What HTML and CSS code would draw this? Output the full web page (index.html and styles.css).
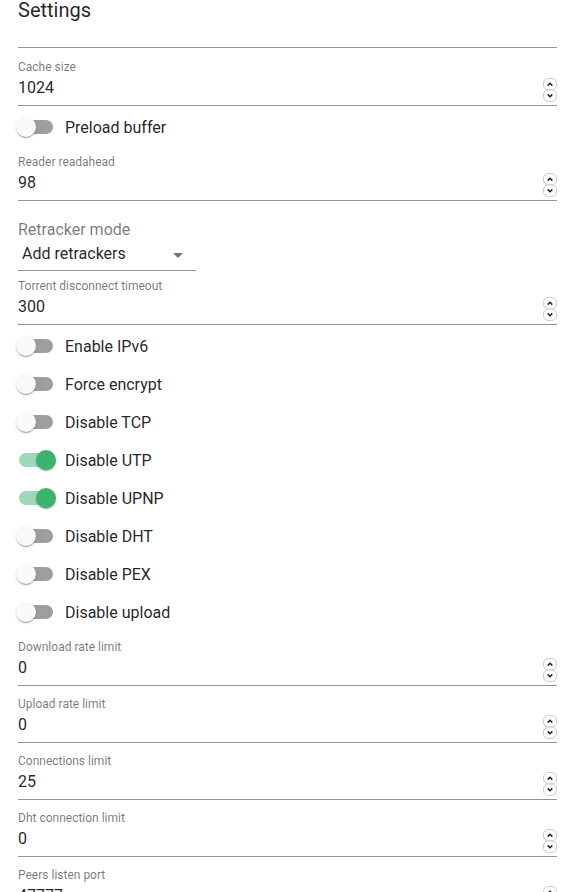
FILE: index.html
```html
<!DOCTYPE html>
<html>
<head>
<meta charset="utf-8">
<link rel="stylesheet" href="styles.css">
</head>
<body>
<div class="dialog">
  <div class="title">Settings</div>
  <div class="empty-field"></div>

  <div class="field">
    <div class="label">Cache size</div>
    <div class="value-row"><span class="value">1024</span><svg class="spin" width="14" height="24" viewBox="0 0 14 24"><rect x="0.5" y="0.5" width="13" height="11.5" rx="5" fill="#fff" stroke="#c8c8c8"/><rect x="0.5" y="12" width="13" height="11.5" rx="5" fill="#fff" stroke="#c8c8c8"/><path d="M4.7 7.6 7 5.3 9.3 7.6" fill="none" stroke="#222" stroke-width="1.5"/><path d="M4.7 16.4 7 18.7 9.3 16.4" fill="none" stroke="#222" stroke-width="1.5"/></svg></div>
  </div>

  <label class="switch-row"><span class="switch"><span class="track"></span><span class="thumb"></span></span><span class="switch-label">Preload buffer</span></label>

  <div class="field">
    <div class="label">Reader readahead</div>
    <div class="value-row"><span class="value">98</span><svg class="spin" width="14" height="24" viewBox="0 0 14 24"><rect x="0.5" y="0.5" width="13" height="11.5" rx="5" fill="#fff" stroke="#c8c8c8"/><rect x="0.5" y="12" width="13" height="11.5" rx="5" fill="#fff" stroke="#c8c8c8"/><path d="M4.7 7.6 7 5.3 9.3 7.6" fill="none" stroke="#222" stroke-width="1.5"/><path d="M4.7 16.4 7 18.7 9.3 16.4" fill="none" stroke="#222" stroke-width="1.5"/></svg></div>
  </div>

  <div class="select-field">
    <div class="select-label">Retracker mode</div>
    <div class="select-box"><span class="select-value">Add retrackers</span><svg class="arrow" width="24" height="24" viewBox="0 0 24 24"><path d="M7 10l5 5 5-5z" fill="#757575"/></svg></div>
  </div>

  <div class="field">
    <div class="label">Torrent disconnect timeout</div>
    <div class="value-row"><span class="value">300</span><svg class="spin" width="14" height="24" viewBox="0 0 14 24"><rect x="0.5" y="0.5" width="13" height="11.5" rx="5" fill="#fff" stroke="#c8c8c8"/><rect x="0.5" y="12" width="13" height="11.5" rx="5" fill="#fff" stroke="#c8c8c8"/><path d="M4.7 7.6 7 5.3 9.3 7.6" fill="none" stroke="#222" stroke-width="1.5"/><path d="M4.7 16.4 7 18.7 9.3 16.4" fill="none" stroke="#222" stroke-width="1.5"/></svg></div>
  </div>

  <label class="switch-row"><span class="switch"><span class="track"></span><span class="thumb"></span></span><span class="switch-label">Enable IPv6</span></label>
  <label class="switch-row"><span class="switch"><span class="track"></span><span class="thumb"></span></span><span class="switch-label">Force encrypt</span></label>
  <label class="switch-row"><span class="switch"><span class="track"></span><span class="thumb"></span></span><span class="switch-label">Disable TCP</span></label>
  <label class="switch-row"><span class="switch on"><span class="track"></span><span class="thumb"></span></span><span class="switch-label">Disable UTP</span></label>
  <label class="switch-row"><span class="switch on"><span class="track"></span><span class="thumb"></span></span><span class="switch-label">Disable UPNP</span></label>
  <label class="switch-row"><span class="switch"><span class="track"></span><span class="thumb"></span></span><span class="switch-label">Disable DHT</span></label>
  <label class="switch-row"><span class="switch"><span class="track"></span><span class="thumb"></span></span><span class="switch-label">Disable PEX</span></label>
  <label class="switch-row"><span class="switch"><span class="track"></span><span class="thumb"></span></span><span class="switch-label">Disable upload</span></label>

  <div class="field">
    <div class="label">Download rate limit</div>
    <div class="value-row"><span class="value">0</span><svg class="spin" width="14" height="24" viewBox="0 0 14 24"><rect x="0.5" y="0.5" width="13" height="11.5" rx="5" fill="#fff" stroke="#c8c8c8"/><rect x="0.5" y="12" width="13" height="11.5" rx="5" fill="#fff" stroke="#c8c8c8"/><path d="M4.7 7.6 7 5.3 9.3 7.6" fill="none" stroke="#222" stroke-width="1.5"/><path d="M4.7 16.4 7 18.7 9.3 16.4" fill="none" stroke="#222" stroke-width="1.5"/></svg></div>
  </div>
  <div class="field">
    <div class="label">Upload rate limit</div>
    <div class="value-row"><span class="value">0</span><svg class="spin" width="14" height="24" viewBox="0 0 14 24"><rect x="0.5" y="0.5" width="13" height="11.5" rx="5" fill="#fff" stroke="#c8c8c8"/><rect x="0.5" y="12" width="13" height="11.5" rx="5" fill="#fff" stroke="#c8c8c8"/><path d="M4.7 7.6 7 5.3 9.3 7.6" fill="none" stroke="#222" stroke-width="1.5"/><path d="M4.7 16.4 7 18.7 9.3 16.4" fill="none" stroke="#222" stroke-width="1.5"/></svg></div>
  </div>
  <div class="field">
    <div class="label">Connections limit</div>
    <div class="value-row"><span class="value">25</span><svg class="spin" width="14" height="24" viewBox="0 0 14 24"><rect x="0.5" y="0.5" width="13" height="11.5" rx="5" fill="#fff" stroke="#c8c8c8"/><rect x="0.5" y="12" width="13" height="11.5" rx="5" fill="#fff" stroke="#c8c8c8"/><path d="M4.7 7.6 7 5.3 9.3 7.6" fill="none" stroke="#222" stroke-width="1.5"/><path d="M4.7 16.4 7 18.7 9.3 16.4" fill="none" stroke="#222" stroke-width="1.5"/></svg></div>
  </div>
  <div class="field">
    <div class="label">Dht connection limit</div>
    <div class="value-row"><span class="value">0</span><svg class="spin" width="14" height="24" viewBox="0 0 14 24"><rect x="0.5" y="0.5" width="13" height="11.5" rx="5" fill="#fff" stroke="#c8c8c8"/><rect x="0.5" y="12" width="13" height="11.5" rx="5" fill="#fff" stroke="#c8c8c8"/><path d="M4.7 7.6 7 5.3 9.3 7.6" fill="none" stroke="#222" stroke-width="1.5"/><path d="M4.7 16.4 7 18.7 9.3 16.4" fill="none" stroke="#222" stroke-width="1.5"/></svg></div>
  </div>
  <div class="field">
    <div class="label">Peers listen port</div>
    <div class="value-row"><span class="value">47777</span><svg class="spin" width="14" height="24" viewBox="0 0 14 24"><rect x="0.5" y="0.5" width="13" height="11.5" rx="5" fill="#fff" stroke="#c8c8c8"/><rect x="0.5" y="12" width="13" height="11.5" rx="5" fill="#fff" stroke="#c8c8c8"/><path d="M4.7 7.6 7 5.3 9.3 7.6" fill="none" stroke="#222" stroke-width="1.5"/><path d="M4.7 16.4 7 18.7 9.3 16.4" fill="none" stroke="#222" stroke-width="1.5"/></svg></div>
  </div>
</div>
</body>
</html>
```

FILE: styles.css
```css
html, body {
  margin: 0;
  padding: 0;
  background: #fff;
}
body {
  font-family: Roboto, "Liberation Sans", sans-serif;
  color: rgba(0, 0, 0, 0.87);
  overflow: hidden;
  height: 892px;
}
.dialog {
  padding: 0 18px;
}
.title {
  font-size: 20px;
  line-height: 20px;
  font-weight: 400;
  height: 20px;
}
.empty-field {
  height: 27px;
  border-bottom: 1px solid rgba(0, 0, 0, 0.42);
  margin-bottom: 3px;
}
.field {
  padding-top: 9px;
  padding-bottom: 8px;
  border-bottom: 1px solid rgba(0, 0, 0, 0.42);
  margin-bottom: 2px;
}
.label {
  font-size: 12px;
  line-height: 14px;
  height: 14px;
  color: rgba(0, 0, 0, 0.54);
  margin-bottom: 4px;
}
.value-row {
  display: flex;
  align-items: flex-start;
  height: 19px;
}
.value {
  flex: 1;
  font-size: 16px;
  line-height: 19px;
}
.spin {
  display: block;
  margin-top: 0;
  flex: none;
}
.switch-row {
  display: flex;
  align-items: center;
  height: 38px;
  margin-left: -11px;
}
.switch {
  position: relative;
  width: 58px;
  height: 38px;
  flex: none;
}
.track {
  position: absolute;
  left: 12px;
  top: 12px;
  width: 34px;
  height: 14px;
  border-radius: 7px;
  background: #000;
  opacity: 0.38;
}
.thumb {
  position: absolute;
  left: 9px;
  top: 9px;
  width: 20px;
  height: 20px;
  border-radius: 50%;
  background: #fafafa;
  box-shadow: 0 2px 1px -1px rgba(0, 0, 0, 0.2), 0 1px 1px 0 rgba(0, 0, 0, 0.14), 0 1px 3px 0 rgba(0, 0, 0, 0.12);
}
.switch.on .track {
  background: #3cb371;
  opacity: 0.5;
}
.switch.on .thumb {
  left: 29px;
  background: #3cb371;
}
.switch-label {
  font-size: 16px;
  line-height: 19px;
}
.select-field {
  padding-top: 17px;
  margin-bottom: -1px;
}
.select-label {
  font-size: 16px;
  line-height: 19px;
  color: rgba(0, 0, 0, 0.54);
  margin-bottom: 5px;
}
.select-box {
  width: 178px;
  display: flex;
  align-items: center;
  height: 19px;
  padding-bottom: 7px;
  border-bottom: 1px solid rgba(0, 0, 0, 0.42);
}
.select-value {
  flex: 1;
  font-size: 16px;
  line-height: 19px;
  padding-left: 4px;
}
.arrow {
  display: block;
  flex: none;
  margin-right: 6px;
  margin-top: 3px;
}
```
